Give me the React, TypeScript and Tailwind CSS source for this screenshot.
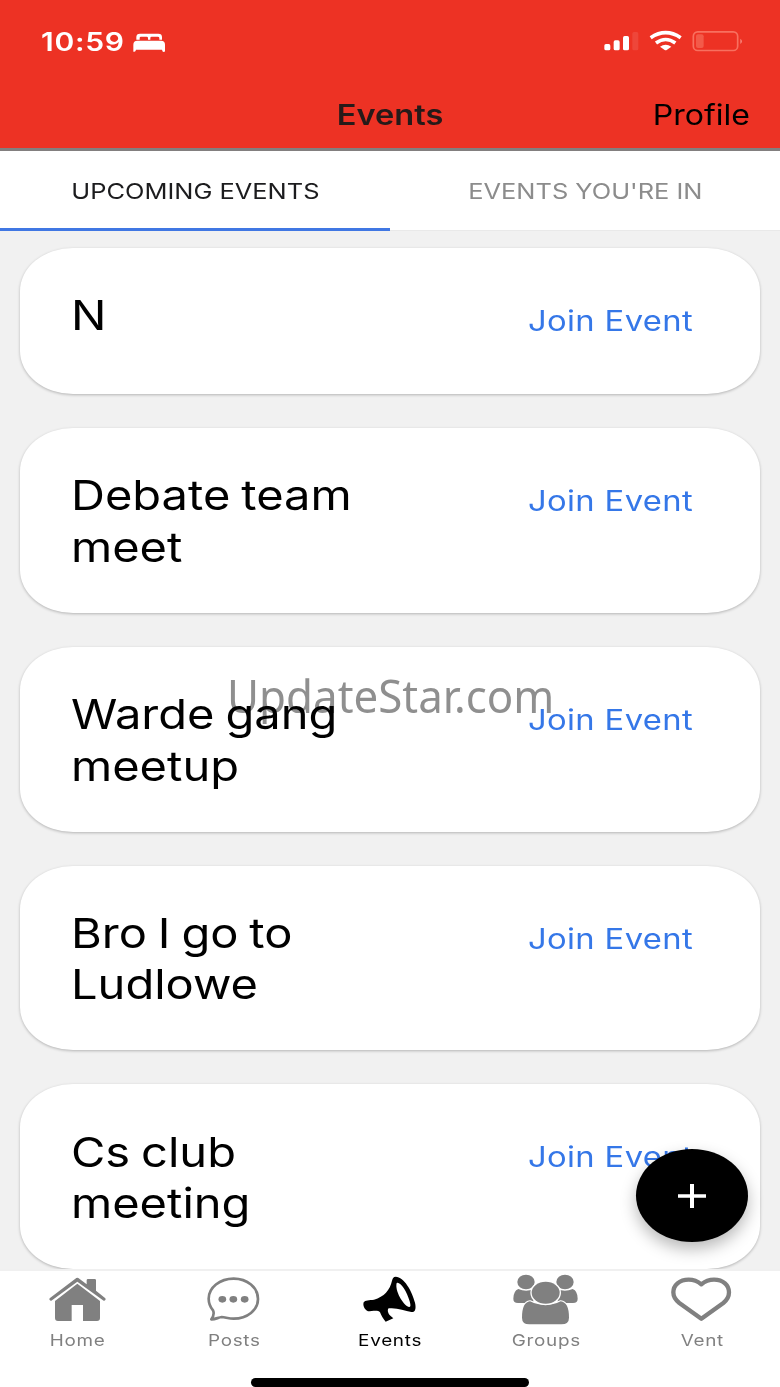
import type { ReactNode } from "react";

const events = ["N", "Debate team meet", "Warde gang meetup", "Bro I go to Ludlowe", "Cs club meeting"];

function BedIcon() {
  return (
    <svg className="h-[19px] w-8" viewBox="399 96 96 57" fill="#fff" aria-hidden="true">
      <path d="M409 116V108Q409 98 420 98H475Q486 98 486 108V116H478V111Q478 107 473 107H455Q451 107 451 111V116H444V111Q444 107 440 107H423Q419 107 419 111V116Z" />
      <path d="M400 152V131Q400 119 412 119H483Q495 119 495 131V150Q495 153 491 153Q487 153 486 146H408Q407 152 403 152Z" />
    </svg>
  );
}

function StatusIcons() {
  return (
    <svg className="h-[22px] w-[142px]" viewBox="640 90 426 66" fill="none" aria-hidden="true">
      <g fill="#fff">
        <rect x="644" y="132" width="18" height="19" rx="5" />
        <rect x="672" y="121" width="18" height="30" rx="5" />
        <rect x="700" y="108" width="18" height="43" rx="5" />
        <rect x="728" y="96" width="18" height="55" rx="5" opacity="0.1" />
      </g>
      <g stroke="#fff" strokeWidth="11">
        <path d="M783 113Q828 83 873 113" />
        <path d="M799 129Q828 108 857 129" />
      </g>
      <path d="M811 140Q828 128 845 140L831 150Q828 152 825 150Z" fill="#fff" />
      <rect x="911" y="95.500" width="133" height="56" rx="13" stroke="#f8705f" strokeWidth="5" />
      <rect x="919" y="103" width="23" height="41" rx="6" fill="#f35a49" />
      <path d="M1052 116Q1062 124 1052 132Z" fill="#f8857a" />
    </svg>
  );
}

function HomeIcon() {
  return (
    <svg className="h-[54px] w-[66px]" viewBox="135 36 198 162" fill="#808080" aria-hidden="true">
      <path d="M165 123L232 71L300 123V174Q300 183 291 183H249V135H215V183H174Q165 183 165 174Z" />
      <path d="M260 70V61Q260 57 264 57H284Q288 57 288 61V92L316 115Q318 118 316 120Q314 123 311 122L232 65L154 122Q151 123 149 120Q147 118 149 115L226 56Q232 51 238 56L260 73Z" />
    </svg>
  );
}

function PostsIcon() {
  return (
    <svg className="h-[54px] w-[66px]" viewBox="603 36 198 162" fill="none" aria-hidden="true">
      <path
        d="M634 178C640 170 643 160 639 151C630 140 626 130 626 116C626 83 659 56 701 56C742 56 774 83 774 117C774 150 742 176 701 176C688 176 676 172 665 171C655 172 645 179 634 178Z"
        stroke="#808080"
        strokeWidth="8"
        strokeLinejoin="round"
      />
      <g fill="#808080">
        <ellipse cx="667" cy="118" rx="11.500" ry="10" />
        <ellipse cx="700" cy="118" rx="11.500" ry="10" />
        <ellipse cx="734" cy="118" rx="11.500" ry="10" />
      </g>
    </svg>
  );
}

function EventsIcon() {
  return (
    <svg className="h-[54px] w-[66px]" viewBox="171 36 198 162" fill="#000" aria-hidden="true">
      <path
        fillRule="evenodd"
        d="M287 50C312 51 336 92 345 128C349 146 346 157 334 156C314 151 288 142 266 145C260 151 266 164 272 168L280 175L257 185C250 178 244 166 240 157C234 149 216 154 204 154C193 149 188 136 191 127C195 120 208 121 222 119C252 110 270 90 276 62C278 54 281 50 287 50ZM290 69C300 64 320 92 329 124C333 138 332 143 325 140C309 134 284 92 290 69Z"
      />
    </svg>
  );
}

function GroupsIcon() {
  return (
    <svg className="h-[54px] w-[66px]" viewBox="639 36 198 162" fill="#808080" aria-hidden="true">
      <ellipse cx="678" cy="66" rx="26" ry="22" />
      <ellipse cx="795" cy="66" rx="26" ry="22" />
      <path d="M655 87Q677 97 700 88V129H654Q640 129 640 116Q640 93 655 87Z" />
      <path d="M818 87Q796 97 773 88V129H819Q833 129 833 116Q833 93 818 87Z" />
      <path
        d="M690 124Q737 147 782 124Q807 127 807 173Q807 193 784 193H688Q666 193 666 173Q666 127 690 124Z"
        stroke="#fff"
        strokeWidth="7"
        paintOrder="stroke"
      />
      <ellipse cx="737" cy="98" rx="42" ry="33" stroke="#fff" strokeWidth="8" paintOrder="stroke" />
    </svg>
  );
}

function VentIcon() {
  return (
    <svg className="h-[54px] w-[66px]" viewBox="327 456 198 162" fill="none" aria-hidden="true">
      <path
        d="M424 493C412 483 400 479 386 479C358 479 340 496 340 517C340 532 349 542 358 549L424 596L490 549C499 542 507 532 507 517C507 496 490 479 462 479C448 479 436 483 424 493Z"
        stroke="#808080"
        strokeWidth="13"
        strokeLinejoin="round"
      />
    </svg>
  );
}

function EventCard({ title }: { title: string }) {
  return (
    <article className="flex min-h-[146px] items-start rounded-[53px/43px] bg-white pt-[42.4px] pb-10 pl-[50.5px] shadow-[0_1px_3px_rgba(0,0,0,0.26)]">
      <h2 className="w-[260px] origin-left scale-x-[1.147] text-[41px] leading-[51.5px] [word-spacing:-2px]">{title}</h2>
      <button className="mt-[12.7px] ml-[197px] origin-left scale-x-[1.17] text-[28px] leading-9 tracking-[0.3px] whitespace-nowrap text-[#3577e8]">
        Join Event
      </button>
    </article>
  );
}

function NavItem({ label, active = false, children }: { label: string; active?: boolean; children: ReactNode }) {
  return (
    <a className={active ? "flex flex-1 flex-col items-center text-black" : "flex flex-1 flex-col items-center text-[#808080]"}>
      {children}
      <span className="mt-1 scale-x-[1.18] text-base leading-5 tracking-[0.6px]">{label}</span>
    </a>
  );
}

export default function App() {
  return (
    <div className="relative flex h-[1387px] w-[780px] flex-col overflow-hidden bg-[#f1f1f1] font-['Inter',sans-serif] text-black [font-feature-settings:'calt'_0]">
      <header className="h-[151px] shrink-0 border-b-[3px] border-[#827f7f] bg-[#ed3224]">
        <div className="flex h-[85px] items-start justify-between pt-[26px] pr-[35px] pl-[41px]">
          <div className="flex items-center pt-px text-white">
            <span className="w-[92px] origin-left scale-x-[1.2] text-[25px] leading-[31px] font-semibold tracking-[0.6px]">10:59</span>
            <BedIcon />
          </div>
          <div className="pt-1">
            <StatusIcons />
          </div>
        </div>
        <div className="grid grid-cols-3 items-center pt-3 pr-[30px] pl-[30px] text-[28px] leading-9">
          <span />
          <h1 className="scale-x-[1.165] text-center font-semibold text-[#261a19]">Events</h1>
          <span className="origin-right scale-x-[1.145] text-right">Profile</span>
        </div>
      </header>

      <div className="grid h-20 shrink-0 grid-cols-2 bg-white text-center text-[22px] leading-[30px]">
        <div className="border-b-[3.500px] border-[#4077e3] pt-[25px] text-[#1c1c1e]">
          <span className="inline-block scale-x-[1.155]">UPCOMING EVENTS</span>
        </div>
        <div className="border-b border-[#e9e9e9] pt-[25px] text-[#8c8c8c]">
          <span className="inline-block scale-x-[1.155]">EVENTS YOU'RE IN</span>
        </div>
      </div>

      <main className="flex min-h-0 flex-1 flex-col gap-[34px] overflow-hidden px-5 pt-[17px]">
        {events.map((title) => (
          <EventCard key={title} title={title} />
        ))}
      </main>

      <nav className="h-[118px] shrink-0 border-t-2 border-[#f0f0f0] bg-white">
        <div className="flex pt-px">
          <NavItem label="Home"><HomeIcon /></NavItem>
          <NavItem label="Posts"><PostsIcon /></NavItem>
          <NavItem label="Events" active><EventsIcon /></NavItem>
          <NavItem label="Groups"><GroupsIcon /></NavItem>
          <NavItem label="Vent"><VentIcon /></NavItem>
        </div>
        <div className="mx-auto mt-7 h-[9px] w-[278px] rounded-full bg-black" />
      </nav>

      <button aria-label="Add event" className="absolute top-[1149px] left-[636px] flex h-[93px] w-28 items-center justify-center rounded-[50%] bg-black shadow-[0_7px_16px_rgba(0,0,0,0.28)]">
        <svg className="h-6 w-7" viewBox="0 0 28 24" fill="#fff" aria-hidden="true">
          <rect y="10.250" width="28" height="3.500" />
          <rect x="12" width="4" height="24" />
        </svg>
      </button>

      <div className="pointer-events-none absolute top-[666px] left-[227px] origin-left scale-x-[0.975] font-['Noto_Sans',sans-serif] text-[45px] leading-[60px] whitespace-nowrap text-[#8f8f8f] mix-blend-multiply">
        UpdateStar.com
      </div>
    </div>
  );
}
